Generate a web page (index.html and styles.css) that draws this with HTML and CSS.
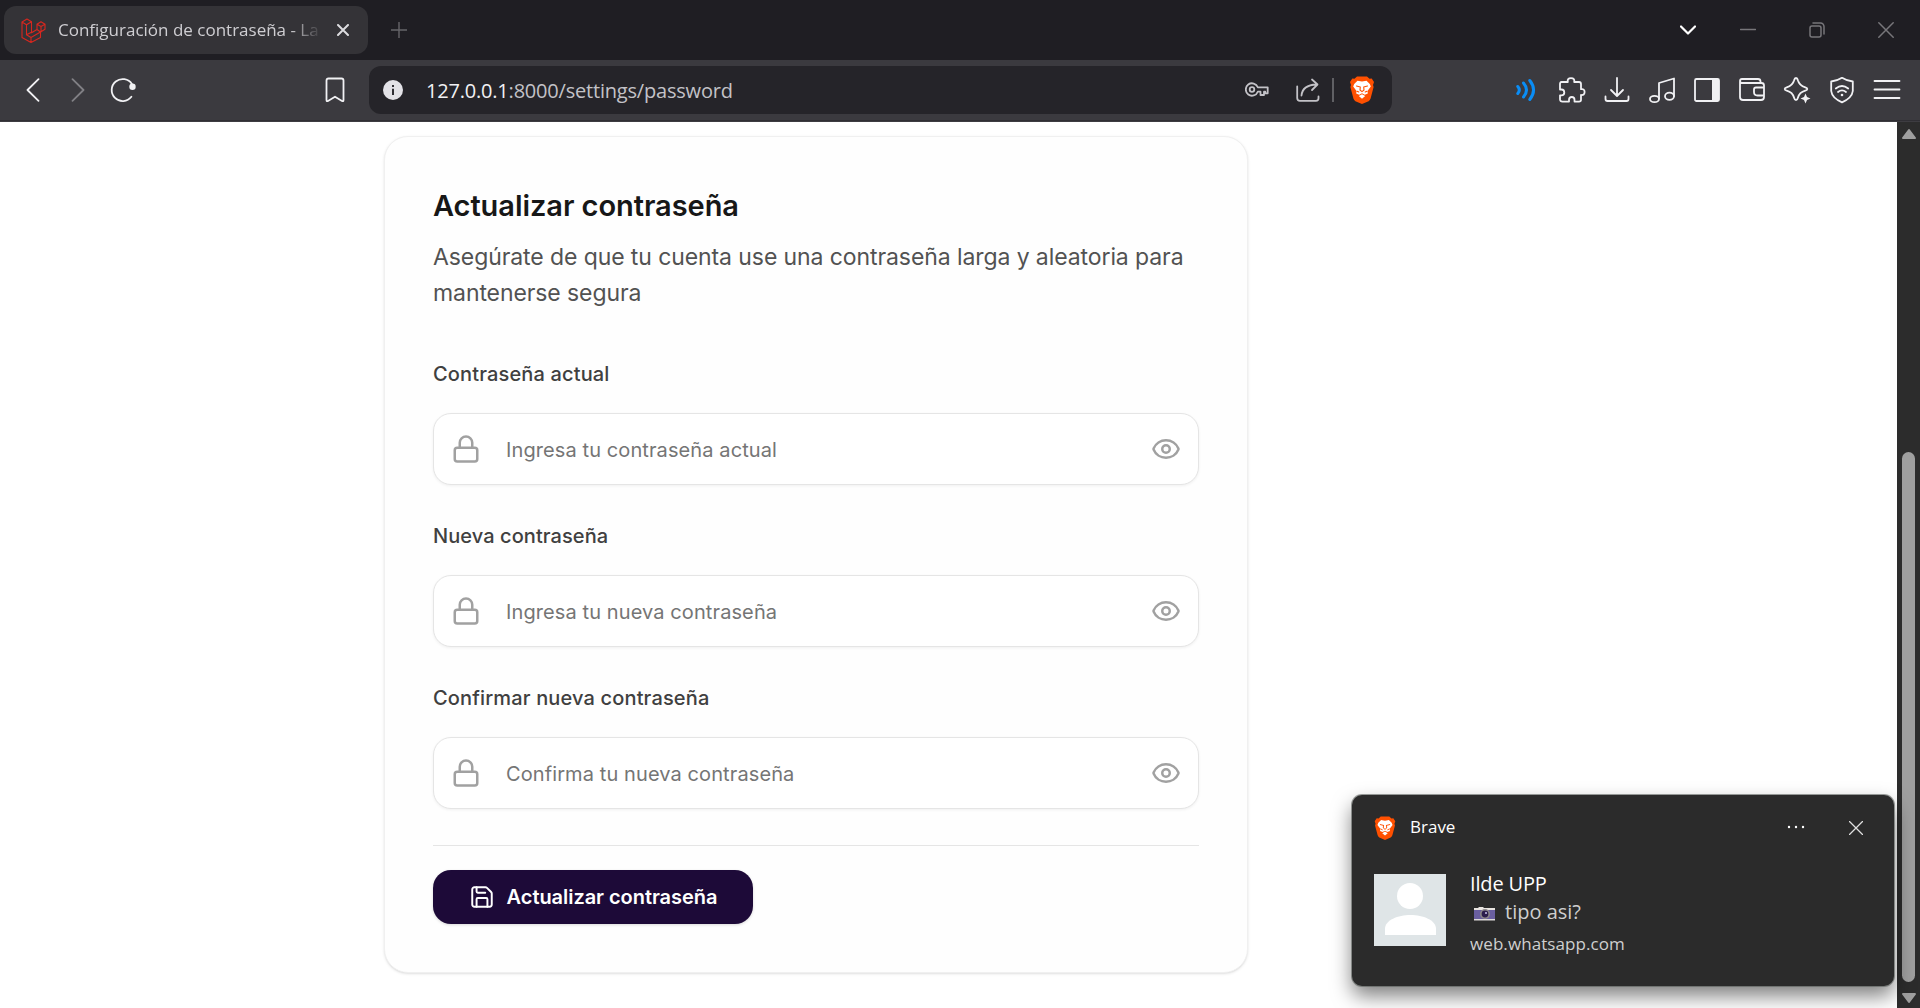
FILE: index.html
```html
<!DOCTYPE html>
<html lang="es">
<head>
<meta charset="utf-8">
<title>Configuración de contraseña - Laravel</title>
<link rel="stylesheet" href="styles.css">
</head>
<body>
<svg class="defs" aria-hidden="true">
  <symbol id="lock" viewBox="0 0 24 24"><rect x="3" y="11" width="18" height="11" rx="2"/><path d="M7 11V7a5 5 0 0 1 10 0v4"/></symbol>
  <symbol id="eye" viewBox="0 0 24 24"><path d="M2.062 12.348a1 1 0 0 1 0-.696 10.75 10.75 0 0 1 19.876 0 1 1 0 0 1 0 .696 10.75 10.75 0 0 1-19.876 0"/><circle cx="12" cy="12" r="3"/></symbol>
  <symbol id="brave" viewBox="0 0 24 28">
    <path class="shield" d="M7 .5h10l2.500 2.300 2.200-.3L24 6l-1 3 .6 2-3 11.500q-.6 1.700-2 2.700L12 28l-6.600-2.800q-1.400-1-2-2.700L.4 11 1 9 0 6l2.300-3.500 2.200.3z"/>
    <path class="face" d="M7.500 4.800l4.500.8 4.500-.8L19.800 8l1 2.500-3.300 4.500.3 2.500-3 1.300L12 17.200 9.200 18.800l-3-1.300.3-2.500-3.300-4.500 1-2.500z"/>
    <path class="lines" d="M6.500 10l3.800 1M17.500 10l-3.800 1M10.300 11l-.3 3 2 1.600 2-1.600-.3-3M7 15.200l1.800.8M17 15.200l-1.800.8"/>
    <path class="face" d="M8.800 20l3.200-1.800 3.200 1.800-3.200 2.700z"/>
  </symbol>
</svg>

<header class="browser">
  <div class="tabstrip">
    <div class="tab">
      <svg class="favicon" viewBox="0 0 25 25"><path d="M1 4l5-3 4.500 2.700v11L16 11.500V6.200l4-2.500 4 2.500v5L19.500 14v5.500L10 24.500 1 19.500zM1 4l4.500 2.700L10.500 3.700M5.500 6.700v10L10 19.500l9.500-5.500M5.500 16.700l5-2.500M10 19.500v5M16 6.200l4 2.300 4-2.300M20 8.500V14M16 11.500l3.500 2.500"/></svg>
      <span class="tab-title">Configuración de contraseña - Laravel</span>
      <svg class="tab-close" viewBox="0 0 12 12"><path d="M1 1l10 10M11 1L1 11"/></svg>
    </div>
    <svg class="new-tab" viewBox="0 0 16 16"><path d="M8 0v16M0 8h16"/></svg>
    <div class="window-controls">
      <svg class="caret" viewBox="0 0 16 10"><path d="M1 1.500l7 7 7-7"/></svg>
      <svg class="minimize" viewBox="0 0 16 16"><path d="M.5 7.500h15"/></svg>
      <svg class="restore" viewBox="0 0 16 16"><rect x="1" y="4" width="11" height="11" rx="2"/><path d="M4 1h7.500a3.500 3.500 0 0 1 3.500 3.500V12"/></svg>
      <svg class="close" viewBox="0 0 16 16"><path d="M.8.8l14.400 14.400M15.200.8L.8 15.200"/></svg>
    </div>
  </div>
  <div class="toolbar">
    <svg class="back" viewBox="0 0 14 24"><path d="M12.500 1.200L1.500 12l11 10.800"/></svg>
    <svg class="forward" viewBox="0 0 14 24"><path d="M1.500 1.200L12.500 12l-11 10.800"/></svg>
    <svg class="reload" viewBox="0 0 26 26"><path d="M21.400 19.800A11 11 0 1 1 22 7.200"/><circle cx="22.500" cy="9.800" r="3.200"/></svg>
    <svg class="bookmark" viewBox="0 0 20 26"><path d="M1.500 3.500q0-2 2-2h13q2 0 2 2v19.500q0 1.800-1.500.9L10 19.700l-7 4.200q-1.500.9-1.500-.9z"/></svg>
    <div class="address">
      <svg class="info" viewBox="0 0 20 20"><circle cx="10" cy="10" r="10"/><path d="M10 8.800V15M10 5v2"/></svg>
      <span class="url"><b>127.0.0.1</b>:8000/settings/password</span>
      <svg class="key" viewBox="0 0 24 16"><path d="M12.800 5.300A6.200 6.200 0 1 0 12.800 9.700H15.500V13H19V9.700H20.300V11.300H22.700V5.300z"/><circle cx="7" cy="7.500" r="2.300"/></svg>
      <svg class="share" viewBox="0 0 24 24"><path d="M1.200 8.500V20q0 2.800 2.800 2.800h16q2.500 0 2.500-2.500v-1.800M5.500 17.500Q6.500 7 20.500 6.500M16 1.500l5.500 5L16 12"/></svg>
      <span class="sep"></span>
      <svg class="brave"><use href="#brave"/></svg>
    </div>
    <div class="actions">
      <svg class="audio" viewBox="0 0 26 26"><path d="M3.800 9.500q3 3.500 0 7M9.500 6q6 7 0 14M15.800 3.500q7.500 9.500 0 19"/></svg>
      <svg viewBox="0 0 26 26"><path d="M2.500 5h6.300Q8 1.200 12 1.200T15.200 5H20q2 0 2 2v5.200q3.600-.6 3.600 2.800T22 18v4.800q0 1.800-2 1.800h-4.500v-1.800q0-2.800-2.700-2.800T10 22.800v1.800H3.500Q1 24.600 1 22.300V18.300h1.500q2.800 0 2.800-2.900t-2.800-2.900H1V7Q1 5 2.500 5z"/></svg>
      <svg viewBox="0 0 26 26"><path d="M13 1v17.500M7 13l6 6 6-6M1.500 19.500V22q0 2 2 2h19q2 0 2-2v-2.500"/></svg>
      <svg viewBox="0 0 26 26"><path d="M10 21.500V6l15-4.500V19"/><ellipse cx="5.500" cy="22" rx="4.500" ry="3.200"/><ellipse cx="20.500" cy="19.200" rx="4.500" ry="3.600"/></svg>
      <svg viewBox="0 0 26 26"><rect x="1" y="2" width="24" height="22" rx="1.500"/><path class="solid" d="M18 2h7v22h-7z"/></svg>
      <svg viewBox="0 0 26 26"><path d="M1 4.500V20q0 3 3 3h18q3 0 3-3V8.500q0-2.500-2.500-2.500H3Q1 6 1 4t2-2h16q2.500 0 2.500 2.500V6M25 10.500h-8q-2 0-2 2V15q0 3.500 3.500 3.500H25"/></svg>
      <svg viewBox="0 0 26 26"><path d="M12 1q1.400 0 1.900 2.200 1.400 5.300 7.400 7.100 2 .6 2 1.700t-2 1.600q-6 1.600-7.400 7.200Q13.400 23 12 23t-1.900-2.200q-1.400-5.600-7.400-7.200-2-.5-2-1.600t2-1.700q6-1.800 7.400-7.100Q10.600 1 12 1z"/><path class="star" d="M21.500 16.500l1.500 3.500 3.500 1.500-3.500 1.500-1.500 3.500-1.500-3.500-3.500-1.500 3.500-1.500z"/></svg>
      <svg viewBox="0 0 26 26"><path d="M13 .8Q18 4 23.800 4.500V14Q23 21 13 25.300 3 21 2.200 14V4.500Q8 4 13 .8zM6.800 11.500q6.200-5 12.400 0M9 15q4-3.200 8 0"/><circle class="solid" cx="13" cy="18" r="1.300"/></svg>
      <svg viewBox="0 0 26 26"><path d="M.5 4h25M.5 12.500h25M.5 21h25"/></svg>
    </div>
  </div>
</header>

<div class="viewport">
  <main class="page">
    <form class="card">
      <h2 class="title">Actualizar contraseña</h2>
      <p class="subtitle">Asegúrate de que tu cuenta use una contraseña larga y aleatoria para<br>mantenerse segura</p>
      <div class="group">
        <label class="label">Contraseña actual</label>
        <div class="field"><svg class="lock"><use href="#lock"/></svg><span class="placeholder">Ingresa tu contraseña actual</span><svg class="eye"><use href="#eye"/></svg></div>
      </div>
      <div class="group">
        <label class="label label-new">Nueva contraseña</label>
        <div class="field"><svg class="lock"><use href="#lock"/></svg><span class="placeholder">Ingresa tu nueva contraseña</span><svg class="eye"><use href="#eye"/></svg></div>
      </div>
      <div class="group">
        <label class="label">Confirmar nueva contraseña</label>
        <div class="field"><svg class="lock"><use href="#lock"/></svg><span class="placeholder">Confirma tu nueva contraseña</span><svg class="eye"><use href="#eye"/></svg></div>
      </div>
      <div class="footer">
        <button type="button" class="submit">
          <svg class="save" viewBox="0 0 24 24"><path d="M15.200 3a2 2 0 0 1 1.400.6l3.800 3.800a2 2 0 0 1 .6 1.400V19a2 2 0 0 1-2 2H5a2 2 0 0 1-2-2V5a2 2 0 0 1 2-2z"/><path d="M17 21v-7a1 1 0 0 0-1-1H8a1 1 0 0 0-1 1v7M7 3v4a1 1 0 0 0 1 1h7"/></svg>
          <span>Actualizar contraseña</span>
        </button>
      </div>
    </form>
  </main>
  <div class="scrollbar">
    <svg class="arrow" viewBox="0 0 16 12"><path d="M8 2l6 8H2z"/></svg>
    <div class="track"><div class="thumb"></div></div>
    <svg class="arrow" viewBox="0 0 16 12"><path d="M8 10l6-8H2z"/></svg>
  </div>
</div>

<aside class="toast">
  <div class="toast-head">
    <svg class="toast-logo"><use href="#brave"/></svg>
    <span class="app">Brave</span>
    <svg class="more" viewBox="0 0 18 4"><circle cx="2" cy="2" r="1.200"/><circle cx="9" cy="2" r="1.200"/><circle cx="16" cy="2" r="1.200"/></svg>
    <svg class="dismiss" viewBox="0 0 14 14"><path d="M.5.5l13 13M13.500.5l-13 13"/></svg>
  </div>
  <div class="toast-body">
    <svg class="avatar" viewBox="0 0 72 72"><circle cx="36" cy="22" r="13"/><path d="M11 61v-6c0-9 13-14 25.500-14S62 46 62 55v6z"/></svg>
    <div class="message">
      <span class="sender">Ilde UPP</span>
      <span class="text"><svg class="camera" viewBox="0 0 21 15"><path fill="#e8e4e0" d="M1 2h3l1-1h4l1 1h11v2H0V2z"/><path fill="#6a5fa0" d="M0 4h21v9H0z"/><path fill="#dcd8d8" d="M0 13h21v1.500H0z"/><circle cx="11" cy="8" r="5" fill="#8d8889"/><circle cx="11" cy="8" r="3.400" fill="#2c1d4c"/><circle cx="12" cy="7" r="1" fill="#c9c2ea"/></svg><span>tipo asi?</span></span>
      <span class="source">web.whatsapp.com</span>
    </div>
  </div>
</aside>
</body>
</html>
```
FILE: styles.css
```css
* { box-sizing: border-box; }
body {
  margin: 0;
  height: 1008px;
  overflow: hidden;
  display: flex;
  flex-direction: column;
  background: #fff;
  font-family: Inter, "Liberation Sans", sans-serif;
}
svg { flex: none; fill: none; stroke: currentColor; stroke-linecap: round; stroke-linejoin: round; }
.defs { position: absolute; width: 0; height: 0; }

.shield { fill: #ff5000; stroke: none; }
.face { fill: #fff; stroke: none; }
.lines { stroke: #ff5000; stroke-width: 1.1; }

/* Browser chrome */
.browser { font-family: "Open Sans", "Noto Sans", sans-serif; color: #f1f1f4; }
.tabstrip { height: 60px; padding: 6px 0 6px 4px; display: flex; align-items: center; background: #1f1e23; }
.tab { width: 364px; height: 48px; padding: 0 18px 0 17px; border-radius: 12px; background: #343337; display: flex; align-items: center; }
.favicon { width: 25px; height: 25px; margin-right: 12px; color: #d8271f; stroke-width: 1.1; }
.tab-title { width: 262px; overflow: hidden; white-space: nowrap; font-size: 17px; line-height: 30px; color: #cfced2; mask-image: linear-gradient(90deg, #000 232px, transparent 264px); }
.tab-close { width: 12px; height: 12px; margin-left: 17px; color: #dcdcdf; stroke-width: 2; }
.new-tab { width: 16px; height: 16px; margin-left: 23px; color: #66656a; stroke-width: 1.4; stroke-linecap: butt; }
.window-controls { margin-left: auto; padding-right: 26px; display: flex; align-items: center; color: #77767a; stroke-width: 1.5; }
.caret { width: 16px; height: 10px; color: #fff; stroke-width: 2.2; margin-right: 44px; }
.minimize { width: 16px; height: 16px; margin-right: 53px; }
.restore { width: 16px; height: 16px; margin-right: 53px; }
.close { width: 16px; height: 16px; }

.toolbar { height: 62px; padding: 6px 11px 8px 26px; display: flex; align-items: center; background: #3b3a3f; box-shadow: inset 0 -1px #3d3c41, inset 0 -2px #302f34; stroke-width: 1.8; }
.back { width: 14px; height: 24px; }
.forward { width: 14px; height: 24px; margin-left: 31px; color: #818085; }
.reload { width: 26px; height: 26px; margin-left: 25px; }
.reload circle { fill: currentColor; stroke: none; }
.bookmark { width: 20px; height: 26px; margin-left: 189px; }
.address { width: 1023px; height: 48px; margin-left: 24px; padding: 0 18px 0 14px; border-radius: 12px; background: #252429; display: flex; align-items: center; }
.info { width: 20px; height: 20px; }
.info circle { fill: #e3e2e7; stroke: none; }
.info path { stroke: #302f34; stroke-width: 2; stroke-linecap: butt; }
.url { margin: 2px 0 0 23px; font-size: 20px; line-height: 32px; letter-spacing: -.2px; color: #c3c2c7; white-space: nowrap; }
.url b { font-weight: 400; color: #f1f1f4; }
.key { width: 24px; height: 16px; margin-left: auto; color: #c3c2c7; }
.share { width: 24px; height: 24px; margin-left: 27px; color: #c3c2c7; }
.sep { width: 2px; height: 24px; margin: 0 16px 0 12px; background: #606064; }
.brave { width: 24px; height: 28px; }
.actions { margin-left: auto; display: grid; grid-template-columns: repeat(9, 45px); justify-items: center; }
.actions svg { width: 26px; height: 26px; overflow: visible; }
.actions .audio { color: #0a8df5; stroke-width: 3; }
.actions .solid { fill: currentColor; stroke: none; }
.actions .star { fill: currentColor; stroke: none; }

/* Page */
.viewport { flex: 1; min-height: 0; display: flex; }
.page { flex: 1; padding: 14px 0 0 384px; }
.card { width: 864px; height: 837px; padding: 51px 48px 47px; border: 1px solid #f0f0f0; border-radius: 24px; background: #fefefe; box-shadow: 0 1px 3px rgb(0 0 0 / .1), 0 1px 2px -1px rgb(0 0 0 / .1); }
.title { margin: 0; font-size: 29px; font-weight: 600; line-height: 36px; letter-spacing: -.06px; color: #171717; white-space: nowrap; }
.subtitle { margin: 15px 0 48px; font-size: 23px; line-height: 36px; letter-spacing: -.09px; color: #525252; white-space: nowrap; }
.group { margin-bottom: 36px; }
.label { display: block; margin-bottom: 24px; font-size: 20px; font-weight: 500; line-height: 30px; letter-spacing: .15px; color: #404040; }
.label-new { letter-spacing: .08px; }
.field { height: 72px; padding: 0 17px; display: flex; align-items: center; border: 1px solid #e5e5e5; border-radius: 18px; background: #fff; box-shadow: 0 1px 3px rgb(0 0 0 / .06); color: #a1a1a1; stroke-width: 2; }
.lock { width: 30px; height: 30px; }
.placeholder { flex: 1; margin-left: 25px; padding-top: 1px; font-size: 20px; line-height: 30px; letter-spacing: .1px; color: #757575; }
.eye { width: 30px; height: 30px; }
.footer { padding-top: 24px; border-top: 1px solid #e5e5e5; }
.submit { width: 320px; height: 54px; padding: 0; display: flex; justify-content: center; align-items: center; gap: 12px; border: 0; border-radius: 18px; background: #1d0a38; color: #fff; font: 600 20px/30px Inter, sans-serif; letter-spacing: -.05px; box-shadow: 0 1px 3px rgb(0 0 0 / .15); }
.save { width: 26px; height: 26px; stroke-width: 1.8; }

.scrollbar { width: 23px; padding: 6px 0 4px; display: flex; flex-direction: column; align-items: center; background: #2c2c2c; }
.arrow { width: 16px; height: 12px; fill: #9f9f9f; color: #9f9f9f; stroke-width: 2; }
.track { flex: 1; width: 13px; display: flex; align-items: flex-end; padding-bottom: 10px; }
.thumb { width: 13px; height: 530px; border-radius: 7px; background: #9f9f9f; }

/* System notification */
.toast { position: absolute; left: 1352px; top: 795px; width: 542px; height: 191px; border-radius: 10px; background: #2b2b2b; box-shadow: 0 0 0 1px rgb(90 95 92 / .6), 0 10px 20px rgb(0 0 0 / .5); padding: 18px 21px 18px 22px; font-family: "Open Sans", "Noto Sans", sans-serif; color: #fff; }
.toast-head { height: 28px; display: flex; align-items: center; }
.toast-logo { width: 22px; height: 24px; margin-top: 1px; }
.app { margin-left: 14px; flex: 1; font-size: 17px; line-height: 28px; }
.more { width: 18px; height: 4px; fill: #fff; stroke: none; }
.dismiss { width: 14px; height: 14px; margin: 1px 10px 0 44px; color: #e0e0e0; stroke-width: 1.3; }
.toast-body { display: flex; gap: 24px; margin-top: 33px; }
.avatar { width: 72px; height: 72px; background: #dfe5e7; fill: #fff; stroke: none; }
.message { display: flex; flex-direction: column; white-space: nowrap; }
.sender { font-size: 20px; line-height: 28px; margin-top: -4px; letter-spacing: -.15px; }
.text { display: flex; align-items: center; gap: 10px; padding-left: 4px; font-size: 20px; line-height: 28px; color: #cfcfcf; }
.camera { width: 21px; height: 15px; margin-top: 3px; stroke: none; }
.source { font-size: 17px; line-height: 28px; margin-top: 4px; letter-spacing: .08px; color: #cfcfcf; }
```
